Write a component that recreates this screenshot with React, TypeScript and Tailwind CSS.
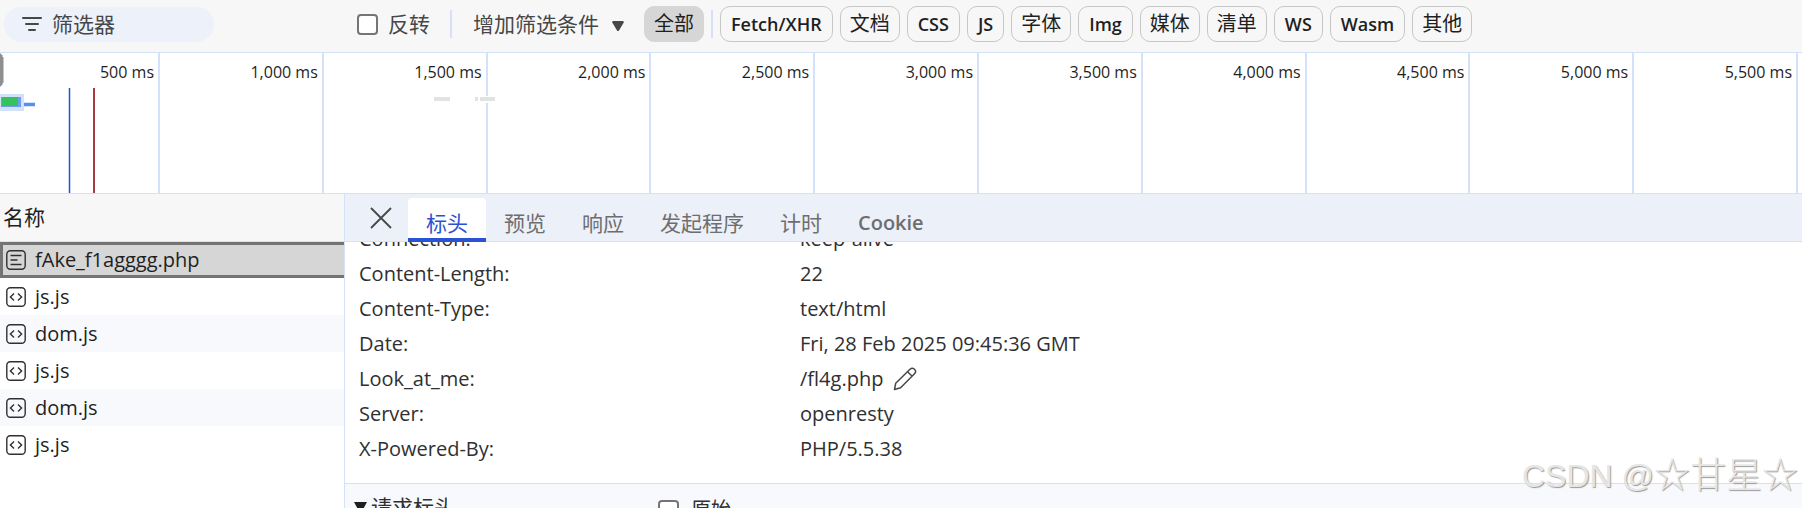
import { useState } from 'react';
import clsx from 'clsx';

const resourceTypes = ['Fetch/XHR', '文档', 'CSS', 'JS', '字体', 'Img', '媒体', '清单', 'WS', 'Wasm', '其他'];

const ticks = [500, 1000, 1500, 2000, 2500, 3000, 3500, 4000, 4500, 5000, 5500];

const requests = [
  { name: 'fAke_f1agggg.php', kind: 'document' },
  { name: 'js.js', kind: 'script' },
  { name: 'dom.js', kind: 'script' },
  { name: 'js.js', kind: 'script' },
  { name: 'dom.js', kind: 'script' },
  { name: 'js.js', kind: 'script' },
];

const tabs = ['标头', '预览', '响应', '发起程序', '计时', 'Cookie'];

const responseHeaders = [
  { name: 'Connection:', value: 'keep-alive' },
  { name: 'Content-Length:', value: '22' },
  { name: 'Content-Type:', value: 'text/html' },
  { name: 'Date:', value: 'Fri, 28 Feb 2025 09:45:36 GMT' },
  { name: 'Look_at_me:', value: '/fl4g.php', editable: true },
  { name: 'Server:', value: 'openresty' },
  { name: 'X-Powered-By:', value: 'PHP/5.5.38' },
];

function FilterIcon() {
  return (
    <svg width="20" height="16" viewBox="0 0 20 16" fill="none" stroke="#474747" strokeWidth="2" strokeLinecap="round">
      <path d="M1 2h18M4 8h12M7 14h6" />
    </svg>
  );
}

function FileIcon({ kind }: { kind: string }) {
  return (
    <svg width="20" height="20" viewBox="0 0 20 20" fill="none" stroke="#303030" strokeWidth="1.4" className="shrink-0">
      <rect x="0.8" y="0.8" width="18.4" height="18.4" rx="3.5" />
      {kind === 'document' ? (
        <path d="M4.500 5.500h11M4.500 10h7M4.500 14.500h11" />
      ) : (
        <path d="M8 6.500 4.400 10 8 13.500M12 6.500l3.600 3.500-3.600 3.500" />
      )}
    </svg>
  );
}

function PencilIcon() {
  return (
    <svg width="24" height="24" viewBox="0 0 24 24" fill="none" stroke="#474747" strokeWidth="1.5" strokeLinejoin="round">
      <path d="M1.500 22.500l1.200-6.200L17 2.200c1.300-1.200 3.200-1.200 4.500 0 1.300 1.300 1.300 3.200 0 4.500L7.600 20.700z" />
      <path d="M14.500 4.700l4.700 4.500" />
    </svg>
  );
}

function Toolbar() {
  const [filter, setFilter] = useState('');
  const [type, setType] = useState('全部');

  return (
    <div className="flex h-[53px] shrink-0 items-center border-b border-[#d3e1fb] bg-[#f7f7f7] pb-1 pl-1 whitespace-nowrap">
      <label className="flex h-[35px] w-[210px] items-center gap-2.5 rounded-full bg-[#edf1fa] pl-[18px]">
        <FilterIcon />
        <input
          value={filter}
          onChange={(e) => setFilter(e.target.value)}
          placeholder="筛选器"
          aria-label="筛选器"
          className="w-36 bg-transparent text-[21px] leading-7 outline-none placeholder:text-[#474747]"
        />
      </label>
      <label className="ml-[143px] flex items-center gap-2.5 text-[21px] leading-7 text-[#474747]">
        <input type="checkbox" className="size-[21px] appearance-none rounded-[4px] border-2 border-[#757575] bg-white" />
        反转
      </label>
      <div className="ml-5 h-7 w-0.5 bg-[#d3e1fb]" />
      <button className="ml-[21px] flex items-center gap-[13px] text-[21px] leading-7 text-[#474747]">
        增加筛选条件
        <svg width="12" height="10" viewBox="0 0 12 10" fill="#474747" className="mt-1">
          <path d="M1 0h10l1 1-5 8.500q-1 1-2 0L0 1z" />
        </svg>
      </button>
      <div className="ml-5 flex items-center gap-[7px] text-[18px] text-[#1f1f1f]">
        <button
          onClick={() => setType('全部')}
          className={clsx(
            'h-9 rounded-[10px] border px-[9px] text-[20px]',
            type === '全部' ? 'border-[#d6d6d6] bg-[#d6d6d6]' : 'border-[#c7c7c7]',
          )}
        >
          全部
        </button>
        <div className="h-7 w-0.5 bg-[#d3e1fb]" />
        {resourceTypes.map((t) => (
          <button
            key={t}
            onClick={() => setType(t)}
            className={clsx(
              'h-9 rounded-[10px] border',
              /[A-Z]/.test(t) ? 'px-[10px] font-semibold' : 'px-[9px] text-[20px]',
              type === t ? 'border-[#d6d6d6] bg-[#d6d6d6]' : 'border-[#c7c7c7]',
            )}
          >
            {t}
          </button>
        ))}
      </div>
    </div>
  );
}

function Timeline() {
  return (
    <div className="relative h-[141px] shrink-0 border-b border-[#d3e1fb]">
      <div className="grid h-full grid-cols-[160px_repeat(10,1fr)] pr-1">
        {ticks.map((ms) => (
          <div key={ms} className="border-r-2 border-[#d3e1fb] pt-[7px] pr-1 text-right text-[16px] leading-6 text-[#1f1f1f]">
            {ms.toLocaleString('en-US')} ms
          </div>
        ))}
      </div>
      {/* Request bars and load markers */}
      <svg className="absolute top-0 left-0" width="510" height="140" viewBox="0 0 510 140" shapeRendering="crispEdges">
        <path d="M0 0q4 1 4 7v20q0 6-4 7z" fill="#b9c8e6" />
        <path d="M0 1q3 1 3 6v19q0 6-3 7z" fill="#8f8f8f" />
        <rect x="0" y="41" width="24" height="17" fill="#d3e1fb" />
        <rect x="1" y="44" width="20" height="10" fill="#6f9cf2" />
        <rect x="2" y="44" width="16" height="9" fill="#34c25b" />
        <rect x="24" y="49" width="11" height="5" fill="#d3e1fb" />
        <rect x="24" y="50" width="11" height="3" fill="#5a8cf5" />
        <rect x="68" y="35" width="3" height="105" fill="#c4d2f3" />
        <rect x="69" y="35" width="1" height="105" fill="#2b52d2" />
        <rect x="93" y="35" width="2" height="105" fill="#a8393c" />
        <rect x="473" y="43" width="24" height="7" fill="#ffffff" />
        <rect x="434" y="44" width="16" height="4" fill="#e1e3e1" />
        <rect x="475" y="44" width="3" height="4" fill="#e1e3e1" />
        <rect x="480" y="44" width="15" height="4" fill="#e1e3e1" />
      </svg>
    </div>
  );
}

function RequestList() {
  const [selected, setSelected] = useState(0);

  return (
    <div className="w-[345px] shrink-0 border-r border-[#d3e1fb]">
      <div className="flex h-12 items-center border-b border-[#d3e1fb] bg-[#f7f7f7] pl-[3px] text-[21px] text-[#1f1f1f]">名称</div>
      {requests.map((r, i) => (
        <button
          key={i}
          onClick={() => setSelected(i)}
          className={clsx(
            'flex w-full items-center gap-[9px] text-left text-[20px] leading-7 text-[#1f1f1f]',
            selected === i ? 'h-9 border-y-3 border-l-3 border-[#747474] bg-[#d6d6d6] pl-[3px]' : 'h-[37px] pl-1.5',
            selected !== i && i % 2 === 0 && i > 0 && 'bg-[#f7f9fd]',
          )}
        >
          <FileIcon kind={r.kind} />
          {r.name}
        </button>
      ))}
    </div>
  );
}

function RequestDetails() {
  const [tab, setTab] = useState('标头');

  return (
    <div className="flex min-w-0 flex-1 flex-col">
      <div className="flex h-12 shrink-0 border-b border-[#d3e1fb] bg-[#ecf0f9] pl-[25px]">
        <button aria-label="关闭" className="mr-4 self-center">
          <svg width="22" height="22" viewBox="0 0 22 22" fill="none" stroke="#474747" strokeWidth="1.8">
            <path d="M1 1l20 20M21 1L1 21" />
          </svg>
        </button>
        <div className="flex pt-1 text-[21px] leading-7">
          {tabs.map((t) => (
            <button
              key={t}
              onClick={() => setTab(t)}
              className={clsx(
                '-mb-px rounded-t-sm border-b-4 px-[18px] pt-2.5',
                t === 'Cookie' && 'text-[20px] font-semibold',
                tab === t ? 'border-[#2b52d2] bg-white text-[#2b52d2]' : 'border-transparent text-[#6e6e6e]',
              )}
            >
              {t}
            </button>
          ))}
        </div>
      </div>
      {/* Scrolled so that the first row is half hidden under the tabs */}
      <div className="shrink-0 overflow-hidden border-b border-[#d3e1fb] pb-[17px]">
        <dl className="-mt-[21px] text-[20px] leading-[35px] text-[#303030]">
          {responseHeaders.map((h) => (
            <div key={h.name} className="flex pl-3.5">
              <dt className="w-[441px] shrink-0">{h.name}</dt>
              <dd className="flex items-center gap-2.5">
                {h.value}
                {h.editable && (
                  <button aria-label="编辑">
                    <PencilIcon />
                  </button>
                )}
              </dd>
            </div>
          ))}
        </dl>
      </div>
      <div className="flex h-12 shrink-0 items-center bg-[#f7f9fd] pl-[9px] text-[21px] text-[#303030]">
        <button className="flex w-[93px] items-center gap-1 overflow-hidden whitespace-nowrap">
          <svg width="13" height="12" viewBox="0 0 13 12" fill="#1f1f1f" className="shrink-0">
            <path d="M0 0h13L6.500 12z" />
          </svg>
          请求标头
        </button>
        <label className="ml-[211px] flex items-center gap-3 pt-1 text-[20px]">
          <input type="checkbox" className="size-[21px] appearance-none rounded-[4px] border-2 border-[#757575] bg-white" />
          原始
        </label>
      </div>
    </div>
  );
}

export default function App() {
  return (
    <div className="relative flex h-screen flex-col overflow-hidden bg-white font-['Open_Sans','Noto_Sans_CJK_SC',sans-serif]">
      <Toolbar />
      <Timeline />
      <div className="flex min-h-0 flex-1">
        <RequestList />
        <RequestDetails />
      </div>
      <div className="pointer-events-none absolute right-1 bottom-3 flex items-center font-['Liberation_Sans','Noto_Sans_CJK_SC',sans-serif] text-[32px] leading-10 font-light whitespace-pre text-[#e6e6e6] [text-shadow:1px_1px_1px_#999999]">
        CSDN @<span className="text-[36px]">☆甘星☆</span>
      </div>
    </div>
  );
}
